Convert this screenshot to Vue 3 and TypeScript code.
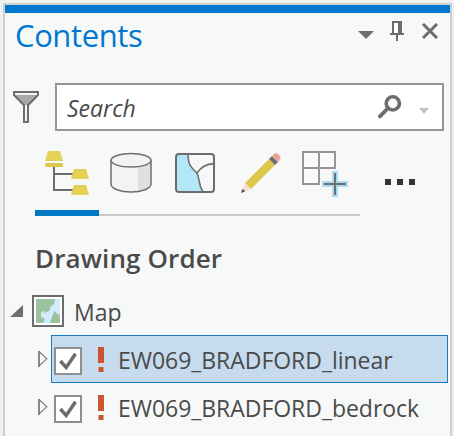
<script setup lang="ts">
import { ref } from 'vue'

interface Layer {
  name: string
  visible: boolean
}

const search = ref('Search')
const selected = ref(0)
const layers = ref<Layer[]>([
  { name: 'EW069_BRADFORD_linear', visible: true },
  { name: 'EW069_BRADFORD_bedrock', visible: true },
])
</script>

<template>
  <div class="window">
    <section class="pane">
      <header class="titlebar">
        <h1>Contents</h1>
        <svg class="chevron" width="16" height="8" viewBox="0 0 16 8"><path d="M0 0H16L8 8Z" fill="#6d6d6d" /></svg>
        <svg class="pin" width="14" height="20" viewBox="0 0 14 20" shape-rendering="crispEdges">
          <path d="M2 0H12V12H14V14H8V20H6V14H0V12H2ZM4 2V12H8V2Z" fill="#6d6d6d" fill-rule="evenodd" />
          <path d="M4 2H8V12H4Z" fill="#fff" />
        </svg>
        <svg class="close" width="16" height="16" viewBox="0 0 16 16"><path d="M1 1L15 15M15 1L1 15" stroke="#6d6d6d" stroke-width="3" /></svg>
      </header>

      <div class="search-row">
        <svg width="26" height="32" viewBox="0 0 26 32">
          <path d="M1 1H25V4L15 14.2V31H11V14.2L1 4Z" fill="#a9a9a9" stroke="#6d6d6d" stroke-width="2" />
          <path d="M2 2H24V4H2ZM12 14H14V30H12Z" fill="#f5f5f5" />
        </svg>
        <div class="search-box">
          <span class="hint">{{ search }}</span>
          <svg class="glass" width="24" height="24" viewBox="0 0 24 24" fill="none" stroke="#6d6d6d">
            <circle cx="14.8" cy="8.4" r="6.6" stroke-width="3.6" />
            <path d="M10 13.2L2 21.4" stroke-width="3.8" stroke-linecap="round" />
          </svg>
          <svg class="caret" width="10" height="6" viewBox="0 0 10 6"><path d="M0 0H10L5 6Z" fill="#c3c3c3" /></svg>
        </div>
      </div>

      <nav class="tabs">
        <div class="tab active">
          <svg width="44" height="44" viewBox="0 0 44 44">
            <path d="M9 16V39H28M9 23H28" fill="none" stroke="#6d6d6d" stroke-width="2" />
            <path d="M3 0H15L18 10H0ZM29 18H41L44 28H26ZM29 34H41L44 44H26Z" fill="#e4d155" />
            <path d="M.5 12H17.5L18 16H0Z" fill="#dcc64b" />
          </svg>
        </div>
        <div class="tab">
          <svg width="42" height="42" viewBox="0 0 42 42">
            <path d="M1 8V32C1 36.5 10 40 21 40S41 36.5 41 32V8Z" fill="#f3f3f3" />
            <path d="M28 12L40 9V33C38 36 34 38 28 39Z" fill="#dfdfdf" />
            <path d="M1 8V32C1 36.5 10 40 21 40S41 36.5 41 32V8" fill="none" stroke="#6d6d6d" stroke-width="1.5" />
            <ellipse cx="21" cy="8.3" rx="20" ry="6.8" fill="#f3f3f3" stroke="#6d6d6d" stroke-width="1.5" />
          </svg>
        </div>
        <div class="tab">
          <svg width="40" height="40" viewBox="0 0 40 40" fill="none" stroke="#6d6d6d" stroke-width="1.7">
            <rect x="1" y="1" width="38" height="38" rx="3" fill="#f7f7f9" stroke="none" />
            <path d="M13 1C13 11 15.5 14 22 20C25 27 23 31 28 39H4Q1 39 1 36V4Q1 1 4 1Z" fill="#b3e7f8" stroke="none" />
            <path d="M13 1C13 11 15.5 14 22 20C25 27 23 31 28 39M22 20C25.500 14.500 31 11 39 10.600" stroke-width="1.6" />
            <rect x="1" y="1" width="38" height="38" rx="3" stroke-width="2" />
          </svg>
        </div>
        <div class="tab pencil">
          <svg width="40" height="40" viewBox="0 0 40 40">
            <path d="M28 6L34 12L10 36L4 30Z" fill="#dcc64b" />
            <path d="M4 30L10 36L0 40Z" fill="#f7dfc8" />
            <path d="M1.4 35.8L4.3 38.2L0 40Z" fill="#555" />
            <path d="M28 6L31 3L37 9L34 12Z" fill="#6d6d6d" />
            <path d="M31 3L33 1Q35 -1 37 1L38.5 2.5Q40.5 4.5 38.5 7L37 9Z" fill="#e5a495" />
          </svg>
        </div>
        <div class="tab add">
          <svg width="46" height="46" viewBox="0 0 46 46" shape-rendering="crispEdges">
            <path d="M1 1H33V17H1ZM17 1V33H1V1" fill="#fafafa" stroke="#969696" stroke-width="2" />
            <path d="M17 1V17" stroke="#969696" stroke-width="2" />
            <path d="M20 33H46M33 20V46" stroke="#abd9f8" stroke-width="6" />
            <path d="M22 33H44M33 22V44" stroke="#6d6d6d" stroke-width="2" />
          </svg>
        </div>
        <div class="more"><i /><i /><i /></div>
      </nav>

      <h2>Drawing Order</h2>

      <div class="map-row">
        <svg class="open" width="13" height="12" viewBox="0 0 13 12"><path d="M13 0V12H0Z" fill="#6d6d6d" /></svg>
        <svg class="map-icon" width="32" height="32" viewBox="0 0 32 32">
          <rect x="1" y="1" width="30" height="30" fill="#fff" stroke="#6d6d6d" stroke-width="2" />
          <path d="M4 4H28V28H4Z" fill="#9bc29d" />
          <path d="M23 4H28V20L25 19L23 16L21 19L20 22L18 28H11L13 24L9 22V17L12 16L13 18L17 16L19 11L22 9Z" fill="#d3eaf9" />
        </svg>
        <span class="label map-label">Map</span>
      </div>

      <div v-for="(layer, i) in layers" :key="layer.name" class="layer-row" @click="selected = i">
        <svg class="closed" width="10" height="18" viewBox="0 0 10 18">
          <path d="M1 1.6V16L8.8 8.8Z" fill="#fafafa" stroke="#777" stroke-width="1.1" />
          <path d="M1 1V17" stroke="#6d6d6d" stroke-width="1.2" />
        </svg>
        <div class="layer" :class="{ selected: selected === i }">
          <svg class="check" width="28" height="28" viewBox="0 0 28 28" @click.stop="layer.visible = !layer.visible">
            <rect x="1" y="1" width="26" height="26" fill="#fff" stroke="#8e8e8e" stroke-width="2" />
            <path v-if="layer.visible" d="M6.3 14L12.2 20.5L21.5 6.8" fill="none" stroke="#6d6d6d" stroke-width="3.5" />
          </svg>
          <svg class="alert" width="6" height="25" viewBox="0 0 6 25"><path d="M0 0H6V16H0ZM.5 20H5.5V25H.5Z" fill="#cb552f" /></svg>
          <span class="label layer-label">{{ layer.name }}</span>
        </div>
      </div>
    </section>
  </div>
</template>

<style>
body {
  margin: 0;
  overflow: hidden;
}
</style>

<style scoped>
.window {
  box-sizing: border-box;
  width: 454px;
  height: 436px;
  padding: 3px 2px 0 3px;
  background: #f0f0f0;
  font-family: "Open Sans", "Noto Sans", sans-serif;
  color: #4a4a4a;
  overflow: hidden;
}
.pane {
  box-sizing: border-box;
  height: 433px;
  border: 2px solid #cfcfcf;
  border-bottom: 0;
  background: #f7f9f8;
  overflow: hidden;
}
.titlebar {
  box-sizing: border-box;
  display: flex;
  align-items: flex-start;
  height: 78px;
  padding: 0 12px 0 10px;
  border-top: 8px solid #0078d0;
}
h1 {
  flex: 1;
  margin: 0;
  font-size: 31px;
  line-height: 44px;
  font-weight: 400;
  letter-spacing: -0.4px;
  color: #0078d0;
}
.chevron { margin: 18px 16px 0 0; }
.pin { margin: 8px 18px 0 0; }
.close { margin-top: 10px; }
.search-row {
  display: flex;
  gap: 16px;
  align-items: center;
  height: 48px;
  padding-left: 8px;
}
.search-box {
  box-sizing: border-box;
  display: flex;
  align-items: center;
  width: 389px;
  height: 48px;
  padding: 0 13px 0 10px;
  border: 2px solid #969696;
  background: #fff;
}
.hint {
  flex: 1;
  padding-top: 2px;
  font-size: 23px;
  font-style: italic;
}
.glass { margin-right: 17px; }
.caret { margin-top: 7px; }
.tabs {
  display: flex;
  height: 85px;
  padding-left: 30px;
}
.tab {
  box-sizing: border-box;
  display: flex;
  align-items: center;
  justify-content: center;
  width: 64px;
  border-bottom: 2px solid #cacaca;
}
.tab.pencil {
  padding: 1px 0 0 3px;
}
.tab.add {
  width: 69px;
  padding: 3px 1px 0 0;
}
.tab.active {
  padding-top: 4px;
  border-bottom: 6px solid #0078c4;
}
.more {
  display: flex;
  gap: 6px;
  padding: 48px 0 0 25px;
}
.more i {
  width: 6px;
  height: 6px;
  background: #333;
}
h2 {
  margin: 21px 0 0 30px;
  font-size: 26px;
  line-height: 42px;
  font-weight: 600;
  letter-spacing: 0.12px;
}
.map-row {
  display: flex;
  align-items: center;
  height: 48px;
  margin-top: 8px;
  padding-left: 5px;
}
.map-icon { margin: 0 10px 0 9px; }
.label {
  font-size: 23px;
  line-height: 32px;
  white-space: nowrap;
}
.map-label { padding-top: 2px; }
.layer-row {
  display: flex;
  align-items: center;
  height: 48px;
  padding: 0 2px 0 33px;
}
.closed { margin-right: 3px; }
.layer {
  box-sizing: border-box;
  display: flex;
  align-items: center;
  width: 397px;
  height: 48px;
  padding: 4px 0 0 2px;
  border: 1px solid transparent;
}
.layer.selected {
  border-color: #1479c0;
  background: #c6dbed;
}
.layer-label {
  margin-bottom: 3px;
  letter-spacing: -0.04px;
}
.alert { margin: 0 14px 4px 16px; }
</style>
